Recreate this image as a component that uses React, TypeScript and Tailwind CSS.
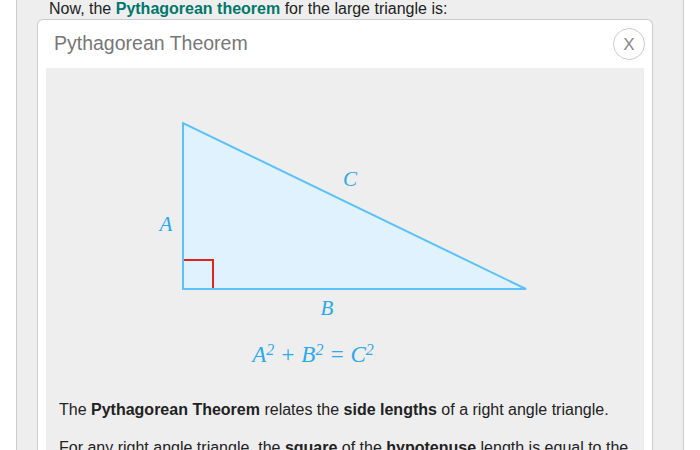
export default function App() {
  const labelCls = 'fill-[#2aa8f0]';
  return (
    <div className="w-[700px] h-[450px] overflow-hidden bg-white font-['Liberation_Sans',Arial,sans-serif] text-[#222]">
      <div className="mx-4 h-full flex flex-col border-x border-[#cccccc] bg-[#eeeeee] px-[20px]">
        {/* intro line, scrolled partly out of view */}
        <p className="-mt-px pl-[12px] text-[16px] leading-[20px]">
          Now, the <span className="font-bold text-[#00776b]">Pythagorean theorem</span> for the large triangle is:
        </p>

        {/* Modal */}
        <div className="w-[616px] flex-1 rounded-t-[6px] border border-b-0 border-[#cccccc] bg-white">
          <div className="flex h-[48px] items-center justify-between pl-[16px] pr-[7px]">
            <span className="text-[19.5px] text-[#777]">Pythagorean Theorem</span>
            <button className="flex h-8 w-8 items-center justify-center rounded-full border border-[#cccccc] bg-white text-[17px] leading-none text-[#888]">
              X
            </button>
          </div>

          <div className="mx-[8px] h-full bg-[#eeeeee] px-[13px]">
            <svg width="597" height="300" viewBox="0 0 597 300" className="-mx-[13px] block">
              <polygon points="137,55 137,221 480,221" fill="#dff2fd" stroke="#5bc1fa" strokeWidth="2" />
              <polyline points="137,192 167,192 167,221" fill="none" stroke="#e3231d" strokeWidth="2" />
              <line x1="137" y1="221" x2="480" y2="221" stroke="#5bc1fa" strokeWidth="2" />
              <line x1="137" y1="55" x2="137" y2="221" stroke="#5bc1fa" strokeWidth="2" />
              <g fontFamily="'Liberation Serif', 'Times New Roman', serif" fontStyle="italic" fontSize="21" textAnchor="middle">
                <text x="304" y="118" className={labelCls}>C</text>
                <text x="120" y="163" className={labelCls}>A</text>
                <text x="281" y="247" className={labelCls}>B</text>
                <text x="267" y="294" fontSize="23" className={labelCls}>
                  A<tspan fontSize="16" dy="-7">2</tspan>
                  <tspan dy="7"> + B</tspan>
                  <tspan fontSize="16" dy="-7">2</tspan>
                  <tspan dy="7"> = C</tspan>
                  <tspan fontSize="16" dy="-7">2</tspan>
                </text>
              </g>
            </svg>

            <div className="pt-[30px] text-[16px] leading-[24px]">
              <p className="mb-[14px]">
                The <b>Pythagorean Theorem</b> relates the <b>side lengths</b> of a right angle triangle.
              </p>
              <p>
                For any right angle triangle, the <b>square</b> of the <b>hypotenuse</b> length is equal to the
                sum of the squares of the other two sides.
              </p>
            </div>
          </div>
        </div>
      </div>
    </div>
  );
}
